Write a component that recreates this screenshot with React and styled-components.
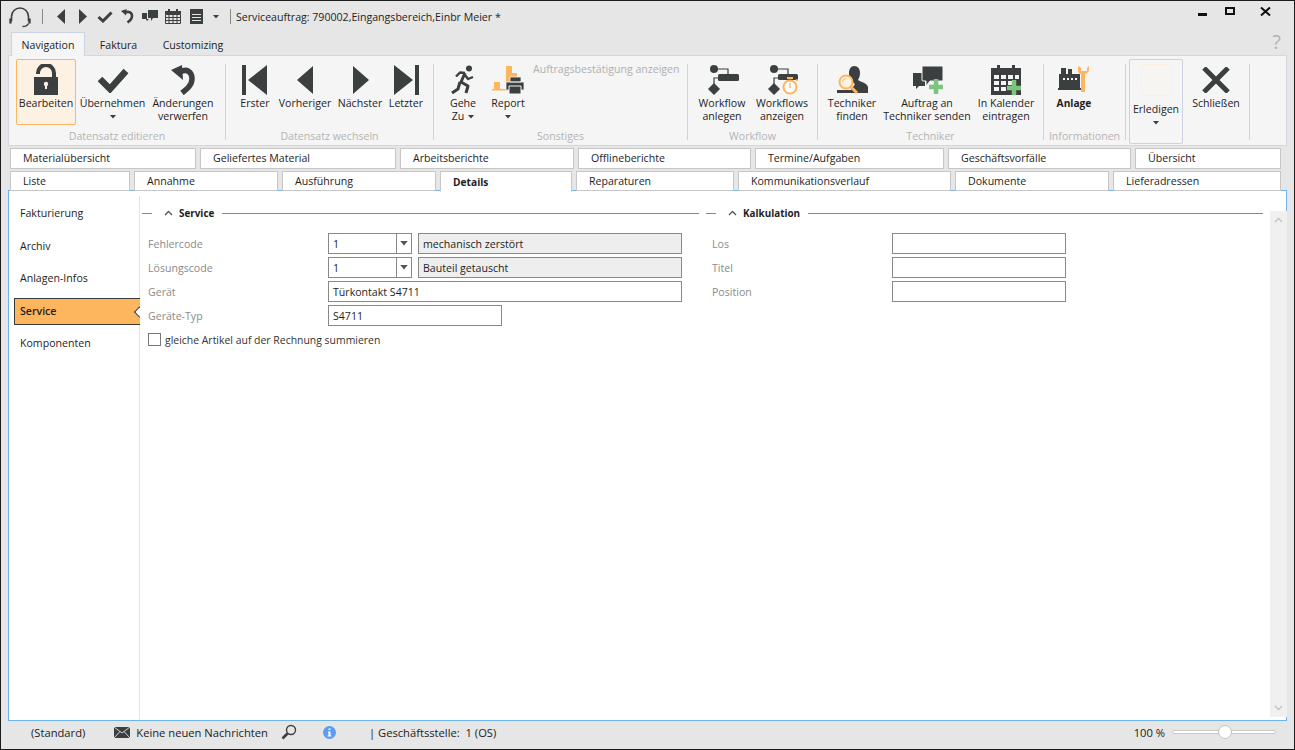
import styled, { createGlobalStyle } from "styled-components";

const GlobalStyle = createGlobalStyle`
  html, body { margin: 0; padding: 0; }
  body { font-family: "Open Sans", "Noto Sans", sans-serif; font-size: 10.6px; color: #1e1e1e; }
  * { box-sizing: border-box; }
`;

const DARK = "#3b3f3f";
const ORANGE = "#fdb55e";
const GREEN = "#7cc47f";

/* ---------- icons ---------- */
const Headset = () => (
  <svg width="22" height="22" viewBox="0 0 22 22" fill="none" stroke={DARK}>
    <path d="M2.5 15V10.5a8.5 8.5 0 0 1 17 0V15" strokeWidth="1.6" />
    <path d="M1.5 12.5v5M20.5 12.5v5" strokeWidth="2.4" />
    <path d="M19.5 17.5c-1 2.4-3 3-6 3" strokeWidth="1.4" />
  </svg>
);
const SmallBack = () => <svg width="10" height="15" viewBox="0 0 10 15"><path d="M9 0v15L1 7.5z" fill={DARK} /></svg>;
const SmallNext = () => <svg width="10" height="15" viewBox="0 0 10 15"><path d="M1 0v15l8-7.5z" fill={DARK} /></svg>;
const SmallCheck = () => (
  <svg width="16" height="12" viewBox="0 0 16 12" fill="none"><path d="M1.5 6l4.5 4 8.5-8.5" stroke={DARK} strokeWidth="3" /></svg>
);
const SmallUndo = () => (
  <svg width="13" height="15" viewBox="0 0 13 15" fill="none">
    <path d="M4 3.5c4-1.5 7 0 7 3.5 0 2.6-1.8 4.6-4.5 6.5" stroke={DARK} strokeWidth="2.6" />
    <path d="M0 2l5.5-2-.5 6.5z" fill={DARK} />
  </svg>
);
const SmallChat = () => (
  <svg width="16" height="13" viewBox="0 0 16 13">
    <path d="M6 0h10v8h-5l-2 3V8H6z" fill={DARK} />
    <path d="M0 3h5v6h2l-2 2-1-2H0z" fill={DARK} />
  </svg>
);
const SmallCalendar = () => (
  <svg width="16" height="15" viewBox="0 0 16 15">
    <path d="M0 2h16v3H0zM3 0h2v2H3zM11 0h2v2h-2z" fill={DARK} />
    <path d="M.5 5.5h15v9H.5zM4 5.5v9M8 5.5v9M12 5.5v9M.5 8.5h15M.5 11.5h15" fill="none" stroke={DARK} />
  </svg>
);
const SmallList = () => (
  <svg width="13" height="15" viewBox="0 0 13 15">
    <path d="M0 0h13v15H0z" fill={DARK} />
    <path d="M2 5h9v1H2zM2 8h9v1H2zM2 11h9v1H2z" fill="#e6e6e6" />
  </svg>
);
const Caret = ({ color = DARK }) => <svg width="6" height="4" viewBox="0 0 6 4"><path d="M0 0h6L3 3.5z" fill={color} /></svg>;

const LockIcon = () => (
  <svg width="26" height="32" viewBox="0 0 26 32">
    <path d="M5 10V9a8 8 0 0 1 16 0v5" fill="none" stroke={DARK} strokeWidth="4" />
    <path d="M1 13h24v18H1z" fill={DARK} />
    <circle cx="13" cy="20" r="2.2" fill="#fdf1e3" />
    <path d="M12 21h2v4h-2z" fill="#fdf1e3" />
  </svg>
);
const CheckIcon = () => (
  <svg width="32" height="26" viewBox="0 0 32 26" fill="none"><path d="M3 12l10 10L29 4" stroke={DARK} strokeWidth="6.5" /></svg>
);
const UndoIcon = () => (
  <svg width="24" height="30" viewBox="0 0 24 30" fill="none">
    <path d="M9 7C16 3 21 7 21 14c0 6-5 10-10 14" stroke={DARK} strokeWidth="5.5" />
    <path d="M0 5l11-5 1 15z" fill={DARK} />
  </svg>
);
const FirstIcon = () => <svg width="26" height="30" viewBox="0 0 26 30"><path d="M0 0h4v30H0zM25 0v30L6 15z" fill={DARK} /></svg>;
const PrevIcon = () => <svg width="17" height="30" viewBox="0 0 17 30"><path d="M16 1v28L0 15z" fill={DARK} /></svg>;
const NextIcon = () => <svg width="17" height="30" viewBox="0 0 17 30"><path d="M1 1v28l16-14z" fill={DARK} /></svg>;
const LastIcon = () => <svg width="26" height="30" viewBox="0 0 26 30"><path d="M1 0v30l19-15zM22 0h4v30h-4z" fill={DARK} /></svg>;
const RunnerIcon = () => (
  <svg width="24" height="30" viewBox="0 0 24 30" fill="none" stroke={DARK} strokeWidth="3" strokeLinejoin="round">
    <circle cx="18" cy="3.5" r="3" fill={DARK} stroke="none" />
    <path d="M14 8l-5-.5-4 4" strokeWidth="2.4" />
    <path d="M14 8l-4 9 7 4-2 7" />
    <path d="M14 10l3 4 5-2" strokeWidth="2.4" />
    <path d="M9 17l-2 7-6 4" />
  </svg>
);
const ReportIcon = () => (
  <svg width="32" height="30" viewBox="0 0 32 30">
    <path d="M2 17h6v7H2zM14 1h6v23h-6zM20 8h5v4h-5zM0 24h16v1.500H0z" fill={ORANGE} />
    <path d="M18 12h11v5H18zM14 17h18v8H14z" fill={DARK} stroke="#f5f5f5" strokeWidth=".8" />
    <path d="M17 21h12v8H17z" fill={DARK} stroke="#f5f5f5" strokeWidth="1" />
  </svg>
);
const WorkflowIcon = () => (
  <svg width="34" height="32" viewBox="-4 0 34 32">
    <circle cx="5" cy="5" r="4" fill={DARK} />
    <path d="M5 5h14v6M9 14H5v6" fill="none" stroke={DARK} strokeWidth="1.2" />
    <rect x="9" y="10" width="21" height="7" rx="1.5" fill={DARK} />
    <path d="M5 19l6 6-6 6-6-6z" fill={DARK} />
  </svg>
);
const WorkflowsIcon = () => (
  <svg width="34" height="32" viewBox="-4 0 34 32">
    <circle cx="5" cy="5" r="4" fill={DARK} />
    <path d="M5 5h14v6M9 14H5v6" fill="none" stroke={DARK} strokeWidth="1.2" />
    <rect x="9" y="10" width="20" height="6" rx="1.5" fill={DARK} />
    <path d="M5 19l6 6-6 6-6-6z" fill={DARK} />
    <circle cx="21" cy="23" r="6.5" fill="#fff" stroke={ORANGE} strokeWidth="2" />
    <path d="M21 19v5" stroke={ORANGE} strokeWidth="1.4" />
    <path d="M18 13h6v2h-6zM27 15l2 1-1 1.5-1.500-1z" fill={ORANGE} />
  </svg>
);
const TechIcon = () => (
  <svg width="34" height="32" viewBox="0 0 34 32">
    <path d="M19 2c4 0 6 3 6 7 0 3-1 5-2 7 3 2 9 3 10 7v6H2v-3h14l4-6c-3-2-6-5-6-11 0-4 2-7 5-7z" fill={DARK} />
    <circle cx="11" cy="18" r="6.5" fill="#fdf3e4" stroke={ORANGE} strokeWidth="2" />
    <path d="M16 23l6 6" stroke={ORANGE} strokeWidth="3" />
    <path d="M7.5 18a3.5 3.5 0 0 1 3.5-3.5" stroke={ORANGE} fill="none" />
  </svg>
);
const SendIcon = () => (
  <svg width="32" height="30" viewBox="0 0 32 30">
    <path d="M2 8h12v13H8l-3 3v-3H2z" fill={DARK} />
    <path d="M12 1h19a1 1 0 0 1 1 1v13a1 1 0 0 1-1 1H19l-4 5v-5h-3a1 1 0 0 1-1-1V2a1 1 0 0 1 1-1z" fill={DARK} stroke="#f5f5f5" />
    <path d="M25 14v15M18 22h15" stroke={GREEN} strokeWidth="4.5" />
  </svg>
);
const CalendarIcon = () => (
  <svg width="30" height="30" viewBox="0 0 30 30">
    <path d="M0 3h30v27H0z" fill={DARK} />
    <path d="M6 0h3v3H6zM21 0h3v3h-3z" fill={DARK} />
    <path d="M3 10h5v4H3zM10 10h5v4h-5zM17 10h5v4h-5zM24 10h4v4h-4zM3 16h5v4H3zM10 16h5v4h-5zM17 16h5v4h-5zM3 22h5v4H3zM10 22h5v4h-5z" fill="#f5f5f5" />
    <path d="M23 15v15M16 23h15" stroke={GREEN} strokeWidth="4.5" />
  </svg>
);
const PlantIcon = () => (
  <svg width="32" height="30" viewBox="0 0 32 30">
    <path d="M3 3h5v6H3zM10 4h4v5h-4zM1 9h21v14H1zM0 23h24v2H0z" fill={DARK} />
    <path d="M5 13h2v2H5zM9 13h2v2H9zM13 13h2v2h-2zM17 13h2v2h-2z" fill="#f5f5f5" />
    <path d="M20 1v5c0 2 2 3 3 3v18h4V9c2-.5 4-2 4-4V1l-2 2v3h-6V3z" fill={ORANGE} />
  </svg>
);
const CloseIcon = () => (
  <svg width="28" height="26" viewBox="0 0 28 26" fill="none"><path d="M2 1l24 24M26 1L2 25" stroke={DARK} strokeWidth="5" /></svg>
);
const Chevron = ({ up = true, color = "#555" }) => (
  <svg width="9" height="6" viewBox="0 0 9 6" fill="none">
    <path d={up ? "M1 5l3.5-3.5L8 5" : "M1 1l3.5 3.5L8 1"} stroke={color} strokeWidth="1.3" />
  </svg>
);
const MailIcon = () => (
  <svg width="16" height="11" viewBox="0 0 16 11">
    <path d="M0 0h16v11H0z" fill={DARK} />
    <path d="M0 0l8 6 8-6M0 11l6-6.5M16 11l-6-6.500" fill="none" stroke="#e6e6e6" strokeWidth=".9" />
  </svg>
);
const SearchIcon = () => (
  <svg width="16" height="16" viewBox="0 0 16 16" fill="none" stroke={DARK}>
    <circle cx="10" cy="6" r="4.5" strokeWidth="1.4" />
    <path d="M6.5 9.5L1.5 14.5" strokeWidth="2.6" />
  </svg>
);
const InfoIcon = () => (
  <svg width="13" height="13" viewBox="0 0 13 13">
    <circle cx="6.5" cy="6.5" r="6.5" fill="#5b9bf0" />
    <path d="M5.5 2.500h2v1.600h-2zM5 5.500h2.500V9.500H8.500v1h-4v-1h1V6.500H5z" fill="#fff" />
  </svg>
);

/* ---------- window ---------- */
const Win = styled.div`
  width: 1295px;
  height: 750px;
  border: 1px solid #1c1c1c;
  background: #e6e6e6;
  display: flex;
  flex-direction: column;
  overflow: hidden;
`;

const TitleBar = styled.div`
  height: 31px;
  display: flex;
  align-items: center;
  padding-left: 8px;
`;
const QuickIcon = styled.span`
  display: flex;
  align-items: center;
  margin-left: ${(p) => p.$ml || 0}px;
`;
const QuickSep = styled.span`
  width: 1px;
  height: 15px;
  margin-left: ${(p) => p.$ml}px;
  background: #888;
`;
const WindowTitle = styled.span`
  margin-left: 5px;
  flex: 1;
`;
const WinButtons = styled.div`
  display: flex;
  align-items: flex-start;
  height: 100%;
  padding-top: 6px;
`;
const MinBtn = styled.span`
  width: 9px;
  height: 3px;
  margin-top: 6px;
  background: #111;
`;
const MaxBtn = styled.span`
  width: 10px;
  height: 8px;
  margin-left: 18px;
  border: 2px solid #111;
`;
const XBtn = styled.span`
  margin: 0 23px 0 25px;
  svg { display: block; }
`;

const RibbonTabs = styled.div`
  height: 23px;
  display: flex;
  align-items: flex-end;
  padding-left: 10px;
  position: relative;
`;
const RibbonTab = styled.div`
  height: ${(p) => (p.$active ? "24px" : "23px")};
  width: ${(p) => p.$w}px;
  margin-bottom: ${(p) => (p.$active ? "-1px" : "0")};
  text-align: center;
  line-height: 26px;
  position: relative;
  z-index: 1;
  ${(p) => p.$active && `
    background: #f5f5f5;
    border: 1px solid #ccd2e2;
    border-bottom: none;
    line-height: 24px;
  `}
`;
const Help = styled.span`
  margin-left: auto;
  margin-right: 13px;
  margin-bottom: 2px;
  font-size: 20px;
  line-height: 22px;
  color: #b3b3b3;
`;

const Ribbon = styled.div`
  height: 91px;
  margin: 0 7px;
  background: #f5f5f5;
  border: 1px solid #d4d7e2;
  display: flex;
  padding-top: 3px;
  flex: none;
`;
const Group = styled.div`
  width: ${(p) => p.$w}px;
  display: flex;
  flex-direction: column;
  flex: none;
`;
const GroupItems = styled.div`
  height: 67px;
  display: flex;
  padding-left: ${(p) => p.$pl || 0}px;
  gap: ${(p) => p.$gap || 0}px;
`;
const GroupLabel = styled.div`
  margin-top: 3px;
  text-align: center;
  color: #b4b4b4;
  line-height: 14px;
  white-space: nowrap;
`;
const GroupSep = styled.div`
  width: 1px;
  flex: none;
  margin: 5px 0;
  background: #ccd2e2;
`;
const Item = styled.div`
  width: ${(p) => p.$w}px;
  height: 66px;
  flex: none;
  display: flex;
  flex-direction: column;
  align-items: center;
  text-align: center;
  line-height: 13px;
  white-space: nowrap;
  border: 1px solid transparent;
  border-radius: 2px;
  ${(p) => p.$on && `
    background: #fdf1e3;
    border-color: ${ORANGE};
  `}
  ${(p) => p.$bold && "font-weight: 700; font-size: 10.2px;"}
`;
const ItemIcon = styled.div`
  height: 34px;
  margin-top: 3px;
  display: flex;
  align-items: center;
  justify-content: center;
  flex: none;
`;
const CaretLine = styled.div`
  height: 13px;
  display: flex;
  align-items: center;
  justify-content: center;
  gap: 4px;
`;
const Spacer = styled.span`
  width: 9px;
  flex: none;
`;
const DisabledText = styled.div`
  color: #b0b0b0;
  margin: 3px 0 0 5px;
  white-space: nowrap;
  line-height: 14px;
`;
const DoneButton = styled.div`
  width: 54px;
  height: 85px;
  margin-left: 3px;
  border: 1px solid #ccd0e2;
  border-radius: 2px;
  display: flex;
  flex-direction: column;
  align-items: center;
  line-height: 13px;
`;
const DoneSwatch = styled.div`
  width: 31px;
  height: 32px;
  margin-top: 4px;
  flex: none;
  background: #f7f5f2;
  border: 1px solid #fdf0e0;
  border-radius: 2px;
`;
const DoneLabel = styled.div`
  margin-top: 7px;
`;

const TabRow = styled.div`
  display: flex;
  gap: 4px;
  padding-left: 9px;
  height: ${(p) => p.$h}px;
  margin-top: ${(p) => p.$mt}px;
  margin-bottom: ${(p) => p.$mb || 0}px;
  flex: none;
  position: relative;
  z-index: ${(p) => p.$z || 0};
`;
const Tab = styled.div`
  width: ${(p) => p.$w}px;
  background: #fff;
  border: 1px solid #c6c6c6;
  padding-left: 12px;
  line-height: 19px;
  white-space: nowrap;
  ${(p) => p.$active && `
    border-bottom-color: #fff;
    font-weight: 700;
    font-size: 10.2px;
    line-height: 21px;
    height: 21px;
  `}
`;

const Content = styled.div`
  flex: 1;
  margin: 0 7px;
  background: #fff;
  border: 1px solid #6cb4ef;
  display: flex;
  min-height: 0;
`;
const SideNav = styled.div`
  width: 131px;
  flex: none;
  margin-top: 5px;
  padding-top: 4px;
  border-right: 1px solid #e4e4e4;
  display: flex;
  flex-direction: column;
  gap: 5.5px;
`;
const NavItem = styled.div`
  height: 27px;
  line-height: 27px;
  padding-left: 11px;
  white-space: nowrap;
  ${(p) => p.$active && `
    margin-left: 5px;
    margin-right: -1px;
    padding-left: 5px;
    line-height: 25px;
    font-weight: 600;
    background: ${ORANGE};
    border: 1px solid #3a3a3a;
    border-right: none;
    position: relative;
    clip-path: inset(-1px 0 -1px -1px);
    &::after {
      content: "";
      position: absolute;
      right: 0;
      top: 9px;
      width: 7px;
      height: 7px;
      background: #fff;
      border-left: 1px solid #3a3a3a;
      border-bottom: 1px solid #3a3a3a;
      transform: translateX(3.5px) rotate(45deg);
    }
  `}
`;
const Main = styled.div`
  flex: 1;
  display: flex;
  padding: 15px 0 0 2px;
  gap: 7px;
`;
const Section = styled.div`
  width: 557px;
  flex: none;
`;
const SectionHead = styled.div`
  height: 14px;
  display: flex;
  align-items: center;
  font-weight: 700;
  font-size: 9.9px;
  margin-bottom: 13px;
  line-height: 14px;
`;
const Dash = styled.span`
  width: 10px;
  height: 1px;
  background: #888;
`;
const HeadChevron = styled.span`
  display: flex;
  margin: 0 6px 0 12px;
`;
const HeadLine = styled.span`
  flex: 1;
  height: 1px;
  margin-left: 8px;
  background: #888;
`;
const Rows = styled.div`
  padding-left: 6px;
  display: flex;
  flex-direction: column;
  gap: 3px;
`;
const Row = styled.div`
  display: flex;
  height: 21px;
  align-items: center;
`;
const FieldLabel = styled.div`
  width: 180px;
  flex: none;
  color: #8a8a8a;
`;
const Field = styled.div`
  width: ${(p) => p.$w}px;
  height: 21px;
  flex: none;
  border: 1px solid #888;
  background: ${(p) => (p.$static ? "#eeeeee" : "#fff")};
  padding-left: 4px;
  line-height: 20px;
  white-space: nowrap;
`;
const Combo = styled.div`
  width: 84px;
  height: 21px;
  flex: none;
  margin-right: 6px;
  border: 1px solid #888;
  display: flex;
  line-height: 20px;
`;
const ComboValue = styled.div`
  flex: 1;
  padding-left: 4px;
`;
const ComboArrow = styled.div`
  width: 15px;
  border-left: 1px solid #888;
  display: flex;
  align-items: center;
  justify-content: center;
  svg { width: 8px; height: 5px; }
`;
const CheckRow = styled.div`
  display: flex;
  align-items: center;
  height: 13px;
  margin-top: 4px;
  gap: 4px;
  font-size: 10.45px;
  color: #333;
`;
const CheckBox = styled.span`
  width: 13px;
  height: 13px;
  border: 1px solid #777;
  background: #fff;
`;
const ScrollBar = styled.div`
  width: 17px;
  margin: 5px 1px 3px auto;
  background: #f0f0f0;
  display: flex;
  flex-direction: column;
  justify-content: space-between;
  align-items: center;
  padding: 6px 0;
`;

const StatusBar = styled.div`
  height: 28px;
  flex: none;
  display: flex;
  align-items: center;
  padding-bottom: 6px;
  font-size: 11.2px;
  color: #222;
`;
const StatusItem = styled.span`
  display: flex;
  align-items: center;
  margin-left: ${(p) => (p.$ml === undefined ? "auto" : `${p.$ml}px`)};
  white-space: nowrap;
`;
const Slider = styled.div`
  width: 104px;
  height: 4px;
  margin: 0 18px 0 7px;
  background: #fff;
  border: 1px solid #c8c8c8;
  border-radius: 2px;
  position: relative;
`;
const Knob = styled.span`
  position: absolute;
  left: 45px;
  top: -6px;
  width: 14px;
  height: 14px;
  border-radius: 50%;
  background: #fff;
  border: 1px solid #c4c4c4;
`;

const tabsTop = [
  ["Materialübersicht", 186],
  ["Geliefertes Material", 196],
  ["Arbeitsberichte", 174],
  ["Offlineberichte", 173],
  ["Termine/Aufgaben", 189],
  ["Geschäftsvorfälle", 183],
  ["Übersicht", 146],
];
const tabsBottom = [
  ["Liste", 120],
  ["Annahme", 144],
  ["Ausführung", 154],
  ["Details", 132, true],
  ["Reparaturen", 158],
  ["Kommunikationsverlauf", 213],
  ["Dokumente", 154],
  ["Lieferadressen", 168],
];
const navItems = ["Fakturierung", "Archiv", "Anlagen-Infos", "Service", "Komponenten"];

const RibbonButton = ({ w, icon, lines, caret, caretText, on, bold }) => (
  <Item $w={w} $on={on} $bold={bold}>
    <ItemIcon>{icon}</ItemIcon>
    {lines.map((l) => <div key={l}>{l}</div>)}
    {caret && <CaretLine>{caretText}<Caret /></CaretLine>}
  </Item>
);

const App = () => (
  <>
    <GlobalStyle />
    <Win>
      <TitleBar>
        <QuickIcon><Headset /></QuickIcon>
        <QuickSep $ml={11} />
        <QuickIcon $ml={13}><SmallBack /></QuickIcon>
        <QuickIcon $ml={12}><SmallNext /></QuickIcon>
        <QuickIcon $ml={9}><SmallCheck /></QuickIcon>
        <QuickIcon $ml={8}><SmallUndo /></QuickIcon>
        <QuickIcon $ml={8}><SmallChat /></QuickIcon>
        <QuickIcon $ml={7}><SmallCalendar /></QuickIcon>
        <QuickIcon $ml={9}><SmallList /></QuickIcon>
        <QuickIcon $ml={10}><Caret /></QuickIcon>
        <QuickSep $ml={11} />
        <WindowTitle>Serviceauftrag: 790002,Eingangsbereich,Einbr Meier *</WindowTitle>
        <WinButtons>
          <MinBtn />
          <MaxBtn />
          <XBtn>
            <svg width="11" height="9" viewBox="0 0 11 9" fill="none"><path d="M1 .5l9 8M10 .5l-9 8" stroke="#111" strokeWidth="2" /></svg>
          </XBtn>
        </WinButtons>
      </TitleBar>

      <RibbonTabs>
        <RibbonTab $active $w={74}>Navigation</RibbonTab>
        <RibbonTab $w={67}>Faktura</RibbonTab>
        <RibbonTab $w={82}>Customizing</RibbonTab>
        <Help>?</Help>
      </RibbonTabs>

      <Ribbon>
        <Group $w={216}>
          <GroupItems $pl={7}>
            <RibbonButton w={60} on icon={<LockIcon />} lines={["Bearbeiten"]} />
            <RibbonButton w={73} icon={<CheckIcon />} lines={["Übernehmen"]} caret />
            <RibbonButton w={68} icon={<UndoIcon />} lines={["Änderungen", "verwerfen"]} />
          </GroupItems>
          <GroupLabel>Datensatz editieren</GroupLabel>
        </Group>
        <GroupSep />
        <Group $w={207}>
          <GroupItems $pl={9}>
            <RibbonButton w={40} icon={<FirstIcon />} lines={["Erster"]} />
            <RibbonButton w={60} icon={<PrevIcon />} lines={["Vorheriger"]} />
            <RibbonButton w={50} icon={<NextIcon />} lines={["Nächster"]} />
            <RibbonButton w={42} icon={<LastIcon />} lines={["Letzter"]} />
          </GroupItems>
          <GroupLabel>Datensatz wechseln</GroupLabel>
        </Group>
        <GroupSep />
        <Group $w={253}>
          <GroupItems $pl={13}>
            <RibbonButton w={32} icon={<RunnerIcon />} lines={["Gehe"]} caret caretText="Zu" />
            <Spacer />
            <RibbonButton w={40} icon={<ReportIcon />} lines={["Report"]} caret />
            <DisabledText>Auftragsbestätigung anzeigen</DisabledText>
          </GroupItems>
          <GroupLabel>Sonstiges</GroupLabel>
        </Group>
        <GroupSep />
        <Group $w={129}>
          <GroupItems $pl={7} $gap={5}>
            <RibbonButton w={54} icon={<WorkflowIcon />} lines={["Workflow", "anlegen"]} />
            <RibbonButton w={56} icon={<WorkflowsIcon />} lines={["Workflows", "anzeigen"]} />
          </GroupItems>
          <GroupLabel>Workflow</GroupLabel>
        </Group>
        <GroupSep />
        <Group $w={225}>
          <GroupItems $pl={8} $gap={4}>
            <RibbonButton w={52} icon={<TechIcon />} lines={["Techniker", "finden"]} />
            <RibbonButton w={90} icon={<SendIcon />} lines={["Auftrag an", "Techniker senden"]} />
            <RibbonButton w={60} icon={<CalendarIcon />} lines={["In Kalender", "eintragen"]} />
          </GroupItems>
          <GroupLabel>Techniker</GroupLabel>
        </Group>
        <GroupSep />
        <Group $w={81}>
          <GroupItems $pl={8}>
            <RibbonButton w={44} bold icon={<PlantIcon />} lines={["Anlage"]} />
          </GroupItems>
          <GroupLabel>Informationen</GroupLabel>
        </Group>
        <GroupSep />
        <DoneButton>
          <DoneSwatch />
          <DoneLabel>Erledigen</DoneLabel>
          <CaretLine><Caret /></CaretLine>
        </DoneButton>
        <Group $w={66}>
          <GroupItems>
            <RibbonButton w={66} icon={<CloseIcon />} lines={["Schließen"]} />
          </GroupItems>
        </Group>
        <GroupSep />
      </Ribbon>

      <TabRow $h={21} $mt={2}>
        {tabsTop.map(([t, w]) => <Tab key={t} $w={w}>{t}</Tab>)}
      </TabRow>
      <TabRow $h={20} $mt={2} $mb={-1} $z={1}>
        {tabsBottom.map(([t, w, a]) => <Tab key={t} $w={w} $active={a}>{t}</Tab>)}
      </TabRow>

      <Content>
        <SideNav>
          {navItems.map((n) => <NavItem key={n} $active={n === "Service"}>{n}</NavItem>)}
        </SideNav>
        <Main>
          <Section>
            <SectionHead>
              <Dash /><HeadChevron><Chevron /></HeadChevron>Service<HeadLine />
            </SectionHead>
            <Rows>
              <Row>
                <FieldLabel>Fehlercode</FieldLabel>
                <Combo><ComboValue>1</ComboValue><ComboArrow><Caret color="#555" /></ComboArrow></Combo>
                <Field $w={264} $static>mechanisch zerstört</Field>
              </Row>
              <Row>
                <FieldLabel>Lösungscode</FieldLabel>
                <Combo><ComboValue>1</ComboValue><ComboArrow><Caret color="#555" /></ComboArrow></Combo>
                <Field $w={264} $static>Bauteil getauscht</Field>
              </Row>
              <Row>
                <FieldLabel>Gerät</FieldLabel>
                <Field $w={354}>Türkontakt S4711</Field>
              </Row>
              <Row>
                <FieldLabel>Geräte-Typ</FieldLabel>
                <Field $w={174}>S4711</Field>
              </Row>
              <CheckRow><CheckBox />gleiche Artikel auf der Rechnung summieren</CheckRow>
            </Rows>
          </Section>
          <Section>
            <SectionHead>
              <Dash /><HeadChevron><Chevron /></HeadChevron>Kalkulation<HeadLine />
            </SectionHead>
            <Rows>
              <Row><FieldLabel>Los</FieldLabel><Field $w={174} /></Row>
              <Row><FieldLabel>Titel</FieldLabel><Field $w={174} /></Row>
              <Row><FieldLabel>Position</FieldLabel><Field $w={174} /></Row>
            </Rows>
          </Section>
          <ScrollBar>
            <Chevron color="#c4c4c4" />
            <Chevron up={false} color="#c4c4c4" />
          </ScrollBar>
        </Main>
      </Content>

      <StatusBar>
        <StatusItem $ml={30}>(Standard)</StatusItem>
        <StatusItem $ml={29}><MailIcon /></StatusItem>
        <StatusItem $ml={6}>Keine neuen Nachrichten</StatusItem>
        <StatusItem $ml={13}><SearchIcon /></StatusItem>
        <StatusItem $ml={26}><InfoIcon /></StatusItem>
        <StatusItem $ml={33}>| Geschäftsstelle:&nbsp; 1 (OS)</StatusItem>
        <StatusItem>100 %</StatusItem>
        <Slider><Knob /></Slider>
      </StatusBar>
    </Win>
  </>
);

export default App;
